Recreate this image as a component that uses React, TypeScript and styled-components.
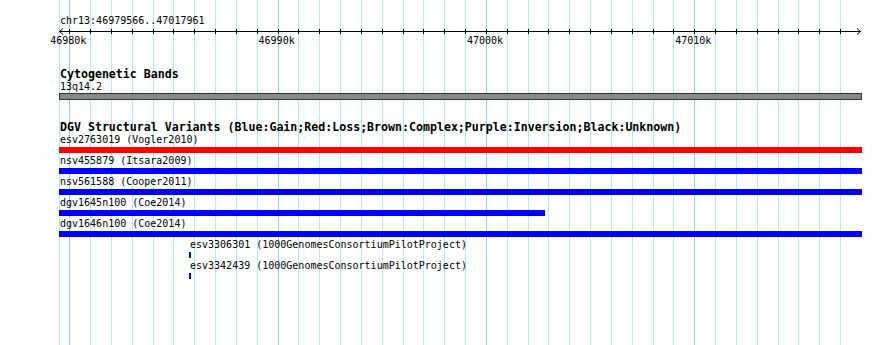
import styled, { createGlobalStyle } from "styled-components";

// --- VIEW / SCALE ---
const VIEW_START = 46979566;
const VIEW_END = 47017961;
const PAGE_WIDTH = 890;
const TRACK_LEFT = 59;
const TRACK_RIGHT = 862;
const ORIGIN_BP = 46980000;
const ORIGIN_X = 69.3; // x of 46980k
const PX_PER_BP = 20.833 / 1000;

const toX = (bp: number) => ORIGIN_X + (bp - ORIGIN_BP) * PX_PER_BP;
const clampX = (x: number) => Math.min(Math.max(x, TRACK_LEFT), TRACK_RIGHT);

type Feature = {
  id: string;
  study: string;
  start: number;
  end: number;
  color: string;
};

const FEATURES: Feature[] = [
  { id: "esv2763019", study: "Vogler2010", start: 46900000, end: 47100000, color: "#ff0000" },
  { id: "nsv455879", study: "Itsara2009", start: 46900000, end: 47100000, color: "#0000ff" },
  { id: "nsv561588", study: "Cooper2011", start: 46900000, end: 47100000, color: "#0000ff" },
  { id: "dgv1645n100", study: "Coe2014", start: 46900000, end: 47002837, color: "#0000ff" },
  { id: "dgv1646n100", study: "Coe2014", start: 46900000, end: 47100000, color: "#0000ff" },
  { id: "esv3306301", study: "1000GenomesConsortiumPilotProject", start: 46985746, end: 46985842, color: "#0000ff" },
  { id: "esv3342439", study: "1000GenomesConsortiumPilotProject", start: 46985746, end: 46985842, color: "#0000ff" },
];

const GRID_KB = Array.from({ length: 38 }, (_, i) => i);

const GlobalStyle = createGlobalStyle`
  html, body {
    margin: 0;
    padding: 0;
    background: #fcfefc;
  }
`;

const Root = styled.div`
  position: relative;
  width: ${PAGE_WIDTH}px;
  height: 345px;
  overflow: hidden;
  background: #fcfefc;
  font-family: "DejaVu Sans Mono", "Liberation Mono", monospace;
  color: #000;
`;

const GridLine = styled.div<{ $major?: boolean }>`
  position: absolute;
  top: 0;
  bottom: 0;
  width: 1px;
  background: ${({ $major }) => ($major ? "#8ccdf0" : "#aeeaee")};
`;

const Page = styled.div`
  position: relative;
  z-index: 1;
  display: flex;
  flex-direction: column;
`;

const LocusLabel = styled.div`
  margin-top: 15px;
  padding-left: 60px;
  font-size: 10px;
  line-height: 12px;
  height: 12px;
`;

const RulerSvg = styled.svg`
  display: block;
  width: ${PAGE_WIDTH}px;
  height: 19px;
  font-family: "DejaVu Sans Mono", "Liberation Mono", monospace;
  font-size: 10px;
`;

const Track = styled.section<{ $gap: number }>`
  margin-top: ${({ $gap }) => $gap}px;
  display: flex;
  flex-direction: column;
`;

const TrackTitle = styled.h2`
  margin: 0;
  padding-left: 60px;
  font-size: 11.6px;
  font-weight: bold;
  line-height: 13px;
  height: 13px;
  white-space: nowrap;
`;

const BandLabel = styled.div`
  padding-left: 60px;
  font-size: 10px;
  line-height: 11px;
  height: 11px;
`;

const BandBar = styled.div`
  margin: 1px 0 0 ${TRACK_LEFT}px;
  width: ${TRACK_RIGHT - TRACK_LEFT}px;
  height: 7px;
  box-sizing: border-box;
  border: 1px solid #333;
  background: #888;
`;

const FeatureRow = styled.div`
  display: flex;
  flex-direction: column;
  margin-bottom: 2px;
`;

const FeatureLabel = styled.div`
  font-size: 10px;
  line-height: 12px;
  height: 12px;
  white-space: nowrap;
`;

const FeatureBar = styled.div<{ $color: string }>`
  margin-top: 1px;
  height: 6px;
  background: ${({ $color }) => $color};
`;

function Ruler() {
  const y = 4.5;
  return (
    <RulerSvg viewBox={`0 0 ${PAGE_WIDTH} 19`}>
      <line x1={TRACK_LEFT} y1={y} x2={TRACK_RIGHT - 1} y2={y} stroke="#000" strokeWidth={1} />
      <polyline points={`63,1.5 59.5,4.5 63,7.5`} fill="none" stroke="#000" strokeWidth={1} />
      <polyline points={`857,1.5 860.5,4.5 857,7.5`} fill="none" stroke="#000" strokeWidth={1} />
      {GRID_KB.map((k) => {
        const x = Math.round(toX(ORIGIN_BP + k * 1000)) + 0.5;
        return <line key={k} x1={x} y1={2} x2={x} y2={7} stroke="#000" strokeWidth={1} />;
      })}
      {[0, 10, 20, 30].map((k) => (
        <text key={k} x={toX(ORIGIN_BP + k * 1000) - 1} y={17} textAnchor="middle" fill="#000">
          {`${(ORIGIN_BP + k * 1000) / 1000}k`}
        </text>
      ))}
    </RulerSvg>
  );
}

export default function App() {
  return (
    <Root>
      <GlobalStyle />
      <GridLine style={{ left: TRACK_LEFT }} />
      {GRID_KB.map((k) => (
        <GridLine key={k} $major={k % 10 === 0} style={{ left: Math.round(toX(ORIGIN_BP + k * 1000)) }} />
      ))}

      <Page>
        <LocusLabel>{`chr13:${VIEW_START}..${VIEW_END}`}</LocusLabel>
        <Ruler />

        <Track $gap={22}>
          <TrackTitle>Cytogenetic Bands</TrackTitle>
          <BandLabel>13q14.2</BandLabel>
          <BandBar />
        </Track>

        <Track $gap={21}>
          <TrackTitle>
            DGV Structural Variants (Blue:Gain;Red:Loss;Brown:Complex;Purple:Inversion;Black:Unknown)
          </TrackTitle>
          {FEATURES.map((f) => {
            const left = Math.round(clampX(toX(f.start)));
            const right = Math.round(clampX(toX(f.end)));
            const width = Math.max(right - left, 2);
            return (
              <FeatureRow key={f.id}>
                <FeatureLabel style={{ marginLeft: left + 1 }}>{`${f.id} (${f.study})`}</FeatureLabel>
                <FeatureBar $color={f.color} style={{ marginLeft: left, width }} />
              </FeatureRow>
            );
          })}
        </Track>
      </Page>
    </Root>
  );
}
